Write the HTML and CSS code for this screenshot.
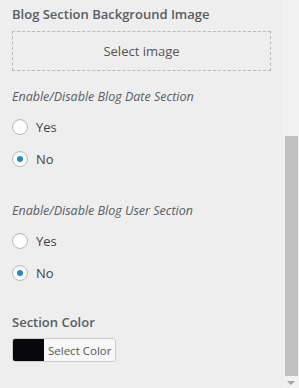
FILE: index.html
```html
<!DOCTYPE html>
<html>
<head>
<meta charset="utf-8">
<link rel="stylesheet" href="styles.css">
</head>
<body>
<div class="frame">
  <div class="content">
    <div class="title">Blog Section Background Image</div>
    <div class="upload">Select image</div>

    <div class="label">Enable/Disable Blog Date Section</div>
    <label class="radio"><span class="circle"></span>Yes</label>
    <label class="radio"><span class="circle on"></span>No</label>

    <div class="label second">Enable/Disable Blog User Section</div>
    <label class="radio"><span class="circle"></span>Yes</label>
    <label class="radio"><span class="circle on"></span>No</label>

    <div class="title color-title">Section Color</div>
    <div class="colorbtn"><span class="swatch"></span><span class="btntext">Select Color</span></div>
  </div>
  <div class="scrollbar">
    <div class="thumb"></div>
    <div class="arrow"></div>
  </div>
</div>
</body>
</html>
```
FILE: styles.css
```css
html, body {
  margin: 0;
  padding: 0;
  background: #eeeeee;
}
body {
  font-family: "Open Sans", "Noto Sans", sans-serif;
  color: #555d66;
}
.frame {
  display: flex;
  width: 299px;
  height: 388px;
  overflow: hidden;
}
.content {
  width: 271px;
  padding: 4px 0 0 12px;
  display: flex;
  flex-direction: column;
  align-items: flex-start;
}
.title {
  font-size: 13px;
  font-weight: 600;
  line-height: 20px;
  height: 20px;
}
.upload {
  margin-top: 7px;
  box-sizing: border-box;
  width: 259px;
  height: 40px;
  border: 1px dashed #b4b9be;
  display: flex;
  align-items: center;
  justify-content: center;
  font-size: 13px;
  color: #555;
}
.label {
  margin-top: 17px;
  font-size: 12.5px;
  font-style: italic;
  line-height: 18px;
  color: #555d66;
}
.label.second {
  margin-top: 35px;
}
.radio {
  display: flex;
  align-items: center;
  font-size: 13px;
  color: #444;
  height: 16px;
  margin-top: 13px;
}
.radio + .radio {
  margin-top: 16px;
}
.circle {
  box-sizing: border-box;
  width: 16px;
  height: 16px;
  border-radius: 50%;
  border: 1px solid #b4b9be;
  background: #fff;
  box-shadow: inset 0 1px 2px rgba(0,0,0,0.07);
  margin-right: 8px;
  display: flex;
  align-items: center;
  justify-content: center;
}
.circle.on::after {
  content: "";
  width: 6px;
  height: 6px;
  border-radius: 50%;
  background: #1e8cbe;
}
.color-title {
  margin-top: 31px;
}
.colorbtn {
  margin-top: 6px;
  display: flex;
  height: 24px;
  box-sizing: border-box;
  border: 1px solid #ccc;
  border-radius: 3px;
  overflow: hidden;
  background: #f7f7f7;
}
.swatch {
  width: 31px;
  background: #07070d;
}
.btntext {
  font-size: 11.5px;
  color: #555;
  padding: 0 4px;
  display: flex;
  align-items: center;
}
.scrollbar {
  width: 16px;
  background: #f1f1f1;
  display: flex;
  flex-direction: column;
  align-items: center;
}
.thumb {
  margin-top: 136px;
  width: 13px;
  height: 240px;
  background: #c1c1c1;
}
.arrow {
  margin-top: 5px;
  width: 0;
  height: 0;
  border-left: 4px solid transparent;
  border-right: 4px solid transparent;
  border-top: 4px solid #a3a3a3;
}
```
